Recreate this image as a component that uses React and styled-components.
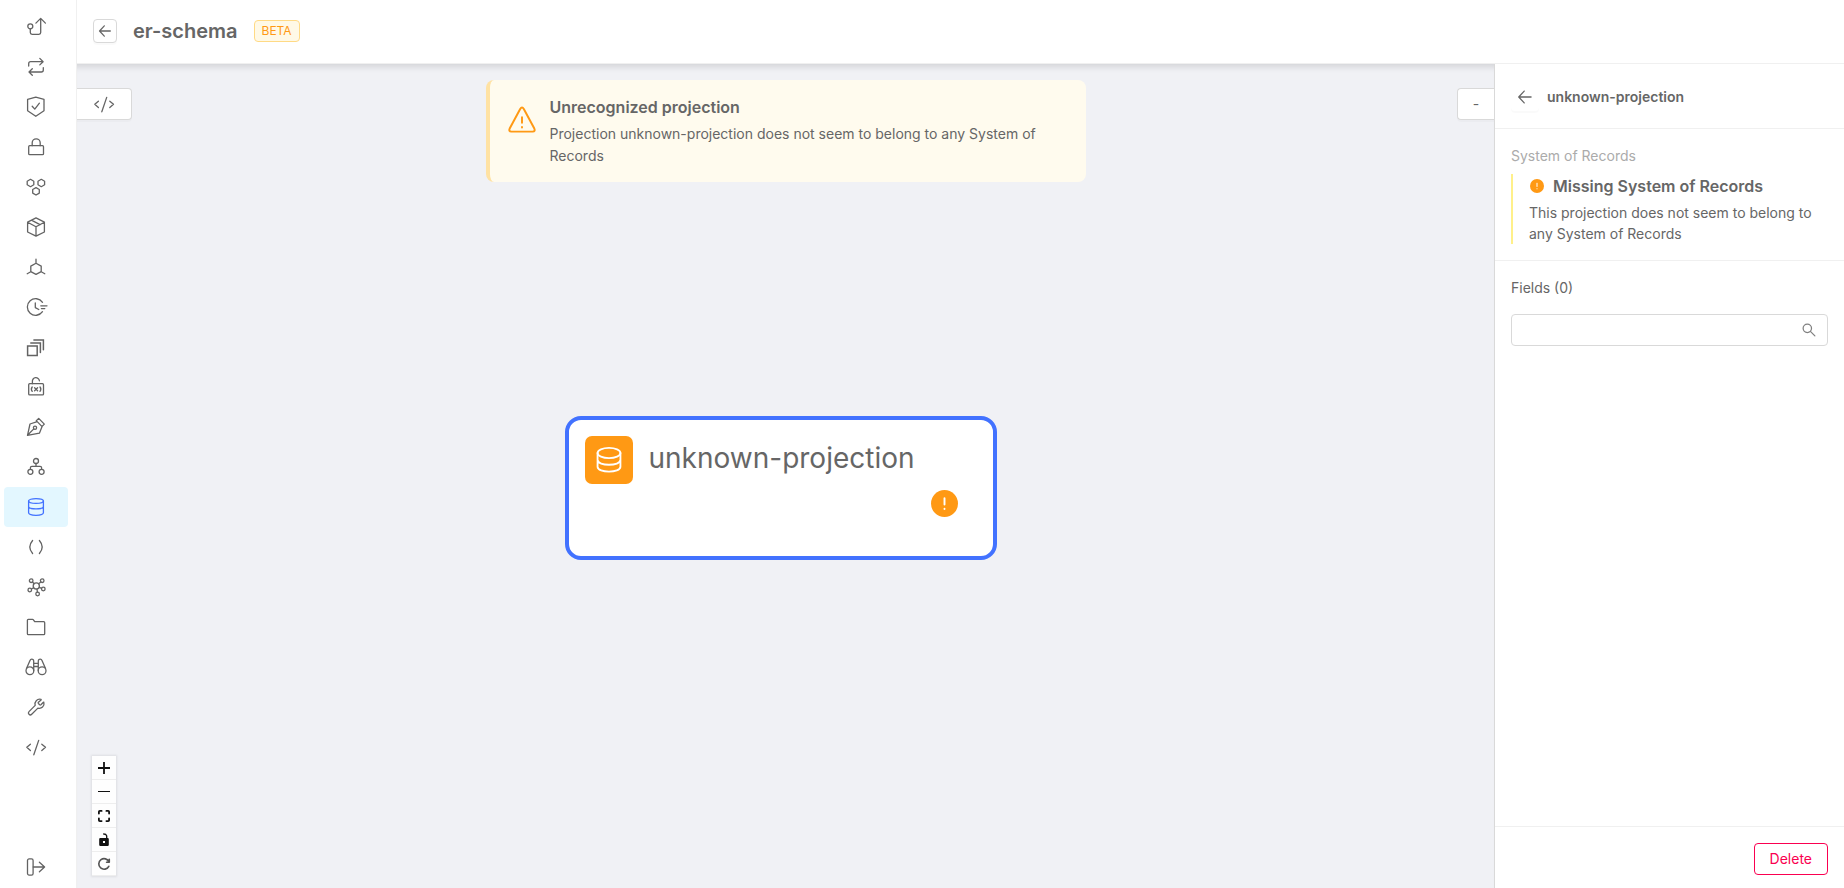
import React from "react";
import styled, { createGlobalStyle } from "styled-components";

const GlobalStyle = createGlobalStyle`
  *, *::before, *::after { box-sizing: border-box; }
  body {
    margin: 0;
    background: #fff;
    color: #666;
    font-family: Inter, "Liberation Sans", sans-serif;
    font-size: 14px;
    line-height: 22px;
  }
  button, input { font: inherit; color: inherit; }
  h1, h2, h3, p, ul { margin: 0; padding: 0; }
`;

const Shell = styled.div`
  display: flex;
  height: 100vh;
`;

const Sidebar = styled.nav`
  flex: none;
  width: 77px;
  padding: 7px 8px 1px 4px;
  border-right: 1px solid #f0f0f0;
  display: flex;
  flex-direction: column;
  justify-content: space-between;
`;

const NavList = styled.ul`
  list-style: none;
`;

const NavLink = styled.a`
  display: flex;
  align-items: center;
  justify-content: center;
  height: 40px;
  padding: 0;
  border: 0;
  border-radius: 4px;
  color: ${(p) => (p.$active ? "#4272ff" : "#636363")};
  background: ${(p) => (p.$active ? "#e3f7ff" : "transparent")};
`;

const Svg = styled.svg`
  display: block;
  flex: none;
  overflow: visible;
  fill: none;
  stroke: currentColor;
  stroke-width: ${(p) => p.$weight || 1.3};
  stroke-linecap: round;
  stroke-linejoin: round;
`;

const Workspace = styled.div`
  flex: 1;
  min-width: 0;
  display: flex;
  flex-direction: column;
`;

const Header = styled.header`
  flex: none;
  height: 64px;
  padding: 0 16px 2px;
  border-bottom: 1px solid #f0f0f0;
  display: flex;
  align-items: center;
  gap: 16px;
`;

const BackButton = styled.button`
  display: flex;
  align-items: center;
  justify-content: center;
  width: 24px;
  height: 24px;
  padding: 0;
  background: #fff;
  border: 1px solid #d9d9d9;
  border-radius: 4px;
  box-shadow: 0 2px 0 rgba(0, 0, 0, 0.02);
`;

const PageTitle = styled.h1`
  font-size: 20px;
  line-height: 28px;
  font-weight: 600;
`;

const Tag = styled.span`
  padding: 0 7px;
  border: 1px solid #ffda85;
  border-radius: 4px;
  background: #fff9e6;
  color: #ff9914;
  font-size: 12px;
  line-height: 20px;
`;

const Body = styled.div`
  flex: 1;
  min-height: 0;
  display: flex;
`;

const Canvas = styled.main`
  position: relative;
  flex: 1;
  min-width: 0;
  padding-top: 16px;
  background: #f0f1f5;
  box-shadow: inset 0 8px 6px -5px rgba(0, 0, 0, 0.12);
`;

const CanvasTab = styled.button`
  position: absolute;
  top: 24px;
  ${(p) => p.$side}: 0;
  width: ${(p) => (p.$side === "left" ? 55 : 37)}px;
  height: 32px;
  display: flex;
  align-items: center;
  justify-content: center;
  padding: 0;
  background: #fff;
  border: 1px solid #d9d9d9;
  border-${(p) => p.$side}: 0;
  border-radius: ${(p) => (p.$side === "left" ? "0 4px 4px 0" : "4px 0 0 4px")};
  box-shadow: 0 2px 0 rgba(0, 0, 0, 0.02);
`;

const Alert = styled.section`
  display: flex;
  align-items: flex-start;
  gap: 14px;
  width: 600px;
  max-width: calc(100% - 160px);
  margin: 0 auto;
  padding: 16px 32px 15px 18px;
  border-left: 4px solid #ffe2a3;
  border-radius: 8px;
  background: #fffbee;
`;

const AlertIcon = styled.span`
  flex: none;
  width: 28px;
  padding-top: 10px;
  color: #ff9914;
`;

const AlertTitle = styled.h2`
  margin-bottom: 5px;
  font-size: 16px;
  line-height: 22px;
  font-weight: 600;
`;

const Node = styled.article`
  position: absolute;
  left: calc(50% - 221px);
  top: calc(50% - 60px);
  width: 432px;
  height: 144px;
  padding: 16px;
  border: 4px solid #4272ff;
  border-radius: 16px;
  background: #fff;
`;

const NodeHead = styled.div`
  display: flex;
  gap: 16px;
`;

const NodeIcon = styled.span`
  display: flex;
  align-items: center;
  justify-content: center;
  width: 48px;
  height: 48px;
  border-radius: 7px;
  background: #ff9914;
  color: #fff;
`;

const NodeTitle = styled.h2`
  font-size: 28px;
  line-height: 44px;
  font-weight: 400;
`;

const NodeFoot = styled.div`
  display: flex;
  justify-content: flex-end;
  padding: 6px 19px 0;
`;

const Controls = styled.div`
  position: absolute;
  left: 15px;
  bottom: 12px;
  display: flex;
  flex-direction: column;
  width: 24px;
  box-shadow: 0 0 2px 1px rgba(0, 0, 0, 0.08);
`;

const ControlButton = styled.button`
  display: flex;
  align-items: center;
  justify-content: center;
  height: 24px;
  padding: 0;
  border: 0;
  border-bottom: 1px solid #eee;
  background: #fefefe;
  color: ${(p) => (p.$soft ? "#555" : "#111")};
`;

const Panel = styled.aside`
  flex: none;
  width: 350px;
  border-left: 1px solid #d9d9d9;
  background: #fff;
  display: flex;
  flex-direction: column;
`;

const PanelHeader = styled.div`
  display: flex;
  align-items: center;
  gap: 8px;
  height: 65px;
  padding: 2px 16px 0;
  border-bottom: 1px solid #f0f0f0;
`;

const GhostButton = styled.button`
  display: flex;
  align-items: center;
  justify-content: center;
  width: 28px;
  height: 28px;
  padding: 0;
  border: 0;
  border-radius: 4px;
  background: transparent;
  box-shadow: 0 2px 0 rgba(0, 0, 0, 0.02);
`;

const PanelTitle = styled.h2`
  font-size: 14px;
  line-height: 22px;
  font-weight: 600;
`;

const RecordSection = styled.section`
  padding: 16px;
  border-bottom: 1px solid #f0f0f0;
`;

const SectionLabel = styled.h3`
  margin-bottom: 8px;
  font-size: 14px;
  line-height: 21px;
  font-weight: 400;
  color: #ababab;
`;

const Notice = styled.div`
  padding-left: 16px;
  border-left: 2px solid #fff08a;
  line-height: 21px;
`;

const NoticeTitle = styled.h3`
  display: flex;
  align-items: center;
  gap: 9px;
  padding: 0 0 4px 1px;
  font-size: 16px;
  line-height: 24px;
  font-weight: 600;
`;

const FieldSection = styled.section`
  flex: 1;
  padding: 16px;
`;

const FieldLabel = styled.label`
  display: block;
  margin-bottom: 15px;
`;

const SearchBox = styled.div`
  display: flex;
  align-items: center;
  height: 32px;
  padding: 0 11px;
  border: 1px solid #d9d9d9;
  border-radius: 4px;
  color: #808080;
`;

const SearchInput = styled.input`
  flex: 1;
  min-width: 0;
  padding: 0;
  border: 0;
  outline: 0;
  background: transparent;
`;

const PanelFooter = styled.footer`
  display: flex;
  justify-content: flex-end;
  padding: 16px 16px 13px;
  border-top: 1px solid #f0f0f0;
`;

const DeleteButton = styled.button`
  height: 32px;
  padding: 0 15px;
  border: 1px solid #fa0050;
  border-radius: 4px;
  background: #fff;
  color: #fa0050;
`;

const shapes = {
  endpoint: (
    <>
      <circle cx="4.3" cy="9.3" r="2.5" />
      <path d="M4.3 11.8v3.7q0 1.8 1.8 1.8h6.8q1.8 0 1.8-1.8V1.5M9.9 6.1l4.8-4.7 4.7 4.7" />
    </>
  ),
  swap: (
    <path d="M2.7 9V6.7q0-2 2-2h12.4M13.8 1.4l3.3 3.3-3.3 3.2M17.3 10.7v2.3q0 2-2 2H3M6.3 11.8 3 15l3.3 3.3" />
  ),
  shield: <path d="M9.8.2 18 2.3v11.4l-8.2 5.6-8.2-5.6V2.3zM6.2 9.2l2.6 2.9 4.6-5.9" />,
  lock: (
    <>
      <rect x="2.7" y="8.7" width="14.8" height="9" rx="1" />
      <path d="M6.2 8.7V5.8a4 4 0 0 1 8 0v2.9" />
    </>
  ),
  hexes: (
    <path d="m4.5 2.3 3.3 1.9v3.6L4.5 9.7 1.2 7.8V4.2zM15.3 2.3l3.3 1.9v3.6l-3.3 1.9L12 7.8V4.2zM10 10.6l3.3 1.9v3.6L10 18l-3.3-1.9v-3.6z" />
  ),
  box: (
    <path d="m10 .9 8.4 4.3v9.8L10 19.2 1.6 15V5.2zM1.6 5.2 10 9.8l8.4-4.6M10 9.8v9.4M5.4 3.2l8.6 4.5" />
  ),
  hub: (
    <path d="m10 6.2 5.2 2.9v5.6L10 17.3l-5.2-2.6V9.1zM10 6.2V2.2M4.8 14.7l-3.6 2M15.2 14.7l3.6 2" />
  ),
  clock: (
    <>
      <path d="M16.5 5.3a8.3 8.3 0 1 0 0 9.4M9.3 5.9v4.7l3.5 1.9" />
      <path d="M14.8 8.8H21M15.4 11.6h3.4" />
    </>
  ),
  stack: (
    <path strokeLinejoin="miter" strokeWidth="1.5" d="M1.6 8.9h9.6v9.6H1.6zM4.8 6h9.6v9.6M7.9 3h9.5v9.8" />
  ),
  variable: (
    <>
      <rect x="2.7" y="6.7" width="14.8" height="11.2" rx="1" />
      <path d="M6.4 6.7V4.6a3.5 3.5 0 0 1 7-.8M6.2 10q-1.7 2.2 0 4.4M14 10q1.7 2.200 0 4.400M8.600 10.700l3 3M11.600 10.700l-3 3" />
    </>
  ),
  pen: (
    <>
      <path d="M1.5 18.3 4 7l7.2-2.4 4.9 5-2.7 6.6zM1.5 18.3l6.3-6.4M10.3 3.8l2.4-2.4 5.6 5.700-2.200 2.300" />
      <circle cx="9" cy="10.7" r="1.6" />
    </>
  ),
  tree: (
    <>
      <circle cx="10" cy="4" r="2.5" />
      <circle cx="4.4" cy="14.8" r="2.5" />
      <circle cx="15.6" cy="14.8" r="2.5" />
      <path d="M10 6.5v2.8M4.4 12.3v-1.5q0-1.5 1.5-1.5h8.2q1.5 0 1.5 1.5v1.5" />
    </>
  ),
  database: (
    <>
      <ellipse cx="10" cy="4" rx="7.4" ry="2.4" />
      <path d="M2.6 4v11.8c0 3.3 14.8 3.3 14.8 0V4M2.6 9.6c0 3 14.8 3 14.8 0" />
    </>
  ),
  parens: <path d="M6.6 3.5q-5.6 6.5 0 13M13.4 3.5q5.6 6.5 0 13" />,
  network: (
    <>
      <circle cx="10.3" cy="9" r="3.1" />
      <circle cx="5.2" cy="3.7" r="1.8" />
      <circle cx="16.2" cy="3.7" r="1.8" />
      <circle cx="3.8" cy="13" r="1.8" />
      <circle cx="17.3" cy="12" r="1.8" />
      <circle cx="11.6" cy="17" r="1.8" />
      <path d="m6.5 5 1.6 1.7M14.9 5l-2.3 1.8M5.5 12l2.1-1.3M15.6 11.3l-2.3-1M11.4 15.2 11 12" />
    </>
  ),
  folder: (
    <path d="M1.4 3.3q0-.9.9-.9h4.3q.5 0 .8.4l1.3 1.9h9q1 0 1 1v11q0 1-1 1H2.4q-1 0-1-1z" />
  ),
  binoculars: (
    <>
      <circle cx="3.9" cy="13.7" r="3.9" />
      <circle cx="16.1" cy="13.7" r="3.9" />
      <path d="M.5 11.6 4 3.4q.5-1.2 1.7-1.2 2 0 2 2v9.3M19.5 11.6 16 3.4q-.5-1.2-1.7-1.2-2 0-2 2v9.3M7.7 6.4h4.6M7.7 9.5h4.6" />
    </>
  ),
  wrench: (
    <path d="M12.4 5.3a.9.9 0 0 0 0 1.2l1.3 1.3a.9.9 0 0 0 1.2 0l2.5-2.5q.4-.3.5.2a4.7 4.7 0 0 1-6 5.6l-6.2 6.2a1.9 1.9 0 0 1-2.7-2.7l6.2-6.2a4.7 4.7 0 0 1 5.7-6q.5.2.2.5z" />
  ),
  code: <path d="M4.4 7.2.8 10.3l3.6 3.2M12.7 3.4 7.8 17.8M15.8 7.2l3.7 3.1-3.7 3.2" />,
  expand: (
    <>
      <rect x="1.5" y="1.9" width="5.6" height="16.2" rx="1.6" />
      <path d="M7.3 10h11.3M13.4 5.2l5.2 4.8-5.2 4.8" />
    </>
  ),
  arrow: <path d="M17.6 10H2.4M9 2.6 2.2 10 9 17.4" />,
  search: (
    <>
      <circle cx="7.6" cy="7.6" r="6" />
      <path d="m12 12 6.4 6.4" />
    </>
  ),
  warning: (
    <>
      <path d="M8.7 2.1q1.3-2 2.6 0l7.5 14q.9 2-1.2 2.2H2.4q-2.1-.2-1.2-2.2z" />
      <path d="M10 8v4M10 15v.3" />
    </>
  ),
  layers: (
    <>
      <ellipse cx="10" cy="4.6" rx="8.8" ry="3.9" />
      <path d="M1.2 4.6v10.600c0 5 17.600 5 17.600 0V4.600M1.200 9.900c0 5 17.600 5 17.600 0" />
    </>
  ),
  plus: <path strokeLinecap="butt" d="M10 0v20M0 10h20" />,
  minus: <path strokeLinecap="butt" d="M0 9.200h20" />,
  fit: <path d="M1.5 6V3q0-1.5 1.5-1.5h3M14 1.5h3q1.5 0 1.5 1.5v3M18.5 14v3q0 1.5-1.5 1.5h-3M6 18.5H3q-1.5 0-1.5-1.5v-3" />,
  unlock: (
    <>
      <path fill="currentColor" fillRule="evenodd" stroke="none" d="M4 6.5h12q2 0 2 2V18q0 2-2 2H4q-2 0-2-2V8.5q0-2 2-2zM8.3 11.5v3.4h3.4v-3.4z" />
      <path d="M14.5 7V3.200Q13.500 0 9.500 0" />
    </>
  ),
  reset: <path d="M18 13.800a8.800 8.800 0 1 1 .3-7.200M18.800 2v5h-4.500" />,
};

function Icon({ name, size = 20, weight }) {
  return (
    <Svg width={size} height={size} viewBox="0 0 20 20" $weight={weight} aria-hidden="true">
      {shapes[name]}
    </Svg>
  );
}

function AlertDot({ size }) {
  return (
    <Svg width={size} height={size} viewBox="0 0 28 28" $weight={2} aria-hidden="true">
      <circle cx="14" cy="14" r="14" fill="#ff9914" stroke="none" />
      <path d="M14 8.500v6.500M14 19.500v.2" stroke="#fff" />
    </Svg>
  );
}

const navItems = [
  ["endpoint", "Endpoints"],
  ["swap", "Proxies"],
  ["shield", "Security"],
  ["lock", "Authorization"],
  ["hexes", "Microservices"],
  ["box", "Applications"],
  ["hub", "Gateway"],
  ["clock", "Cron jobs"],
  ["stack", "Collections"],
  ["variable", "Variables"],
  ["pen", "Design"],
  ["tree", "Flows"],
  ["database", "Projections"],
  ["parens", "Functions"],
  ["network", "Network"],
  ["folder", "Files"],
  ["binoculars", "Monitoring"],
  ["wrench", "Tools"],
  ["code", "Code"],
];

const controls = [
  ["plus", "Zoom in", 12, 3],
  ["minus", "Zoom out", 12, 1.700],
  ["fit", "Fit view", 12, 3],
  ["unlock", "Toggle lock", 12, 2.200],
  ["reset", "Reset layout", 12, 2.700],
];

export default function App() {
  return (
    <>
      <GlobalStyle />
      <Shell>
        <Sidebar aria-label="Main">
          <NavList>
            {navItems.map(([icon, label]) => (
              <li key={icon}>
                <NavLink
                  href={`#${icon}`}
                  aria-label={label}
                  aria-current={icon === "database" ? "page" : undefined}
                  $active={icon === "database"}
                >
                  <Icon name={icon} />
                </NavLink>
              </li>
            ))}
          </NavList>
          <NavLink as="button" aria-label="Expand menu">
            <Icon name="expand" />
          </NavLink>
        </Sidebar>
        <Workspace>
          <Header>
            <BackButton aria-label="Back">
              <Icon name="arrow" size={14} weight={1.8} />
            </BackButton>
            <PageTitle>er-schema</PageTitle>
            <Tag>BETA</Tag>
          </Header>
          <Body>
            <Canvas>
              <Alert role="alert">
                <AlertIcon>
                  <Icon name="warning" size={28} weight={1.4} />
                </AlertIcon>
                <div>
                  <AlertTitle>Unrecognized projection</AlertTitle>
                  <p>
                    Projection unknown-projection does not seem to belong to any System of Records
                  </p>
                </div>
              </Alert>
              <CanvasTab $side="left" aria-label="Show code">
                <Icon name="code" />
              </CanvasTab>
              <CanvasTab $side="right" aria-label="Collapse panel">
                -
              </CanvasTab>
              <Node>
                <NodeHead>
                  <NodeIcon>
                    <Icon name="layers" size={26} weight={1.4} />
                  </NodeIcon>
                  <NodeTitle>unknown-projection</NodeTitle>
                </NodeHead>
                <NodeFoot>
                  <AlertDot size={27} />
                </NodeFoot>
              </Node>
              <Controls>
                {controls.map(([icon, label, size, weight]) => (
                  <ControlButton key={icon} aria-label={label} $soft={icon === "reset"}>
                    <Icon name={icon} size={size} weight={weight} />
                  </ControlButton>
                ))}
              </Controls>
            </Canvas>
            <Panel>
              <PanelHeader>
                <GhostButton aria-label="Back to list">
                  <Icon name="arrow" size={16} weight={1.6} />
                </GhostButton>
                <PanelTitle>unknown-projection</PanelTitle>
              </PanelHeader>
              <RecordSection>
                <SectionLabel>System of Records</SectionLabel>
                <Notice>
                  <NoticeTitle>
                    <AlertDot size={14} />
                    Missing System of Records
                  </NoticeTitle>
                  <p>This projection does not seem to belong to any System of Records</p>
                </Notice>
              </RecordSection>
              <FieldSection>
                <FieldLabel htmlFor="field-search">Fields (0)</FieldLabel>
                <SearchBox>
                  <SearchInput id="field-search" type="text" />
                  <Icon name="search" size={14} weight={1.8} />
                </SearchBox>
              </FieldSection>
              <PanelFooter>
                <DeleteButton>Delete</DeleteButton>
              </PanelFooter>
            </Panel>
          </Body>
        </Workspace>
      </Shell>
    </>
  );
}
